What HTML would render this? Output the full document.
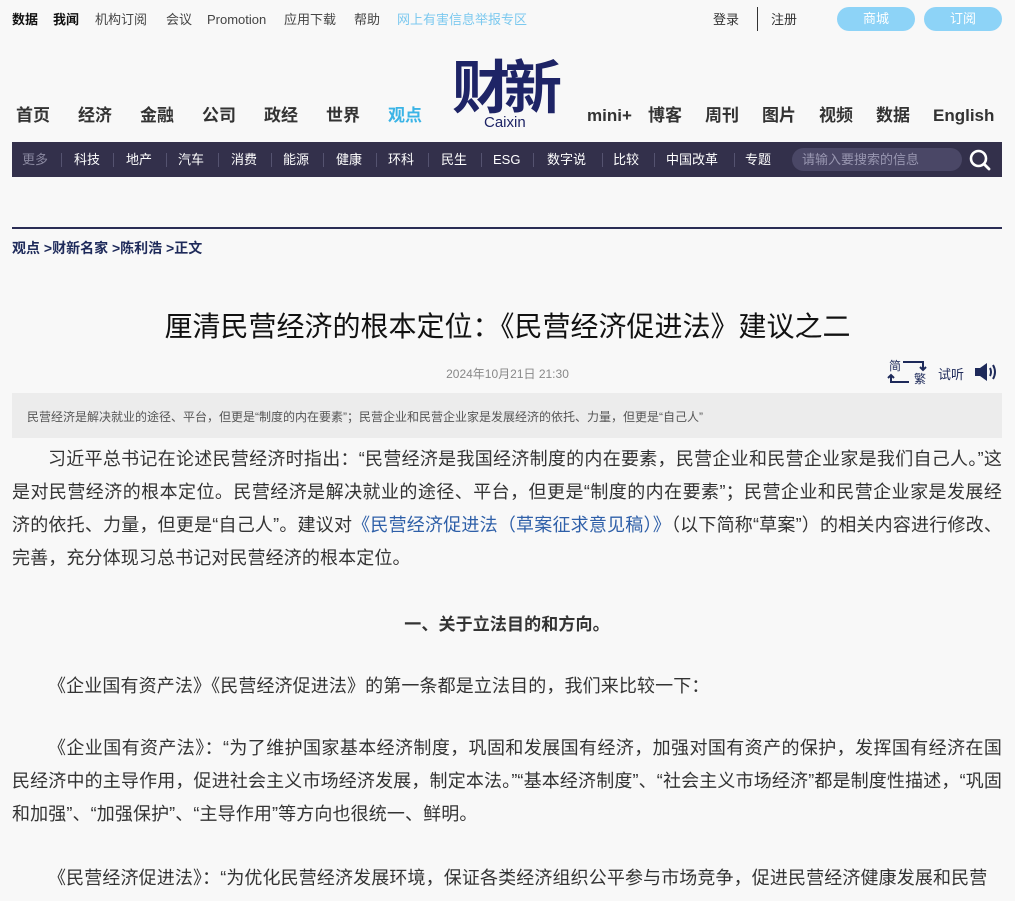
<!DOCTYPE html>
<html><head><meta charset="utf-8"><style>
body{margin:0;background:#f8f8f8;font-family:"Liberation Sans","Noto Sans CJK SC",sans-serif;color:#333;width:1015px;height:901px;overflow:hidden;position:relative}
.a{position:absolute;white-space:nowrap}
.t{position:absolute;top:10px;font-size:13px;line-height:20px;height:20px;color:#444;white-space:nowrap}
.btn{position:absolute;top:7px;width:78px;height:24px;border-radius:12px;background:#8dd3f7;color:#fff;font-size:13px;text-align:center;line-height:24px}
.nav{position:absolute;top:105px;font-size:17px;line-height:22px;height:22px;font-weight:bold;color:#333;white-space:nowrap}
.bar{position:absolute;left:12px;top:142px;width:990px;height:35px;background:#33304b}
.bar span{position:absolute;top:0;line-height:35px;font-size:13px;color:#fff}
.sep{position:absolute;top:11px;width:1px;height:14px;background:#555370}
p{margin:0;position:absolute;left:12px;width:990px;font-size:18px;line-height:33px;text-indent:36px;color:#333;letter-spacing:0.12px;text-align:justify}
</style></head><body>
<div class="t" style="left:12px;font-weight:bold;color:#111">数据</div>
<div class="t" style="left:53px;font-weight:bold;color:#111">我闻</div>
<div class="t" style="left:95px">机构订阅</div>
<div class="t" style="left:166px">会议</div>
<div class="t" style="left:207px">Promotion</div>
<div class="t" style="left:284px">应用下载</div>
<div class="t" style="left:354px">帮助</div>
<div class="t" style="left:397px;color:#7cc9ef">网上有害信息举报专区</div>
<div class="t" style="left:713px;color:#333">登录</div>
<div class="a" style="left:757px;top:7px;width:1px;height:24px;background:#333"></div>
<div class="t" style="left:771px;color:#333">注册</div>
<div class="btn" style="left:837px">商城</div><div class="btn" style="left:924px">订阅</div>
<div class="a" style="left:452px;top:50px;font-size:58px;line-height:66px;font-weight:bold;color:#1e2466;letter-spacing:-6px;font-family:'Noto Sans CJK SC',sans-serif">财新</div>
<div class="a" style="left:484px;top:114px;font-size:15px;color:#1e2466">Caixin</div>
<div class="nav" style="left:16px">首页</div>
<div class="nav" style="left:78px">经济</div>
<div class="nav" style="left:140px">金融</div>
<div class="nav" style="left:202px">公司</div>
<div class="nav" style="left:264px">政经</div>
<div class="nav" style="left:326px">世界</div>
<div class="nav" style="left:388px;color:#3bb4e6">观点</div>
<div class="nav" style="left:587px">mini+</div>
<div class="nav" style="left:648px">博客</div>
<div class="nav" style="left:705px">周刊</div>
<div class="nav" style="left:762px">图片</div>
<div class="nav" style="left:819px">视频</div>
<div class="nav" style="left:876px">数据</div>
<div class="nav" style="left:933px">English</div>
<div class="bar">
<span style="left:10px;color:#8a88a0">更多</span><div class="sep" style="left:49px"></div>
<span style="left:62px">科技</span><div class="sep" style="left:101px"></div>
<span style="left:114px">地产</span><div class="sep" style="left:154px"></div>
<span style="left:166px">汽车</span><div class="sep" style="left:206px"></div>
<span style="left:219px">消费</span><div class="sep" style="left:259px"></div>
<span style="left:271px">能源</span><div class="sep" style="left:311px"></div>
<span style="left:324px">健康</span><div class="sep" style="left:364px"></div>
<span style="left:376px">环科</span><div class="sep" style="left:416px"></div>
<span style="left:429px">民生</span><div class="sep" style="left:469px"></div>
<span style="left:481px">ESG</span><div class="sep" style="left:521px"></div>
<span style="left:535px">数字说</span><div class="sep" style="left:590px"></div>
<span style="left:601px">比较</span><div class="sep" style="left:642px"></div>
<span style="left:654px">中国改革</span><div class="sep" style="left:722px"></div>
<span style="left:733px">专题</span>
<div style="position:absolute;left:780px;top:6px;width:170px;height:23px;border-radius:12px;background:#4a4766"></div>
<span style="left:790px;color:#9896b0">请输入要搜索的信息</span>
<svg style="position:absolute;left:957px;top:7px" width="22" height="22" viewBox="0 0 22 22"><circle cx="9.5" cy="9.5" r="7.5" fill="none" stroke="#fff" stroke-width="2.6"/><path d="M15 15l5 5" stroke="#fff" stroke-width="2.8" stroke-linecap="round"/></svg>
</div>
<div class="a" style="left:12px;top:227px;width:990px;height:2px;background:#2a2d55"></div>
<div class="a" style="left:12px;top:238px;font-size:14px;font-weight:bold;color:#1e2a5a">观点 &gt;财新名家 &gt;陈利浩 &gt;正文</div>
<div class="a" style="left:0;width:1015px;text-align:center;top:305px;font-size:28px;color:#111;font-family:'Noto Sans CJK SC',sans-serif;line-height:40px">厘清民营经济的根本定位：《民营经济促进法》建议之二</div>
<div class="a" style="left:0;width:1015px;text-align:center;top:365px;font-size:12px;color:#888">2024年10月21日 21:30</div>
<div class="a" style="left:889px;top:357px;font-size:12px;color:#1e2a5a">简</div>
<div class="a" style="left:914px;top:370px;font-size:12px;color:#1e2a5a">繁</div>
<svg class="a" style="left:887px;top:360px" width="42" height="26"><path d="M16 2h20v8M33 7l3 3 3-3M22 22H4v-7M1 18l3-3 3 3" fill="none" stroke="#1e2a5a" stroke-width="2"/></svg>
<div class="a" style="left:938px;top:364px;font-size:13px;color:#1e2a5a">试听</div>
<svg class="a" style="left:974px;top:362px" width="26" height="20"><path d="M1 6h5l7-5v18l-7-5H1z" fill="#1e2a5a"/><path d="M16 6q2 4 0 8M19 3q4 7 0 14" fill="none" stroke="#1e2a5a" stroke-width="2"/></svg>
<div class="a" style="left:12px;top:393px;width:990px;height:45px;background:#ececec"></div>
<div class="a" style="left:27px;top:408px;font-size:12px;color:#555">民营经济是解决就业的途径、平台，但更是“制度的内在要素”；民营企业和民营企业家是发展经济的依托、力量，但更是“自己人”</div>
<p style="top:443px">习近平总书记在论述民营经济时指出：“民营经济是我国经济制度的内在要素，民营企业和民营企业家是我们自己人。”这是对民营经济的根本定位。民营经济是解决就业的途径、平台，但更是“制度的内在要素”；民营企业和民营企业家是发展经济的依托、力量，但更是“自己人”。建议对<span style="color:#2e5fa8">《民营经济促进法（草案征求意见稿）》</span>（以下简称“草案”）的相关内容进行修改、完善，充分体现习总书记对民营经济的根本定位。</p>
<p style="top:608px;text-align:center;text-indent:0;font-weight:bold;font-size:17px">一、关于立法目的和方向。</p>
<p style="top:670px">《企业国有资产法》《民营经济促进法》的第一条都是立法目的，我们来比较一下：</p>
<p style="top:732px">《企业国有资产法》：“为了维护国家基本经济制度，巩固和发展国有经济，加强对国有资产的保护，发挥国有经济在国民经济中的主导作用，促进社会主义市场经济发展，制定本法。”“基本经济制度”、“社会主义市场经济”都是制度性描述，“巩固和加强”、“加强保护”、“主导作用”等方向也很统一、鲜明。</p>
<p style="top:862px">《民营经济促进法》：“为优化民营经济发展环境，保证各类经济组织公平参与市场竞争，促进民营经济健康发展和民营</p>
</body></html>
